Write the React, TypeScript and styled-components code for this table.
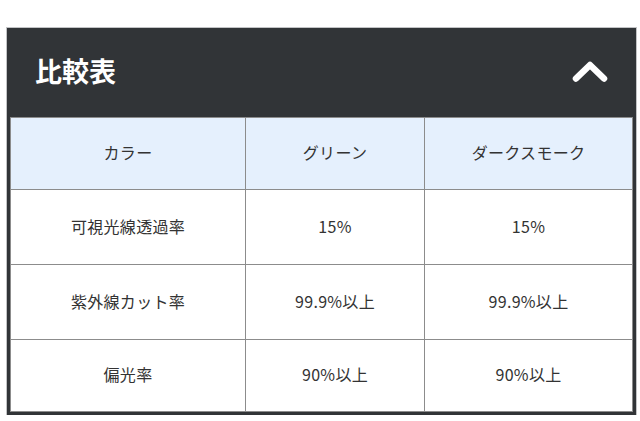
import React from "react";
import styled, { createGlobalStyle } from "styled-components";

const GlobalStyle = createGlobalStyle`
  html, body {
    margin: 0;
    padding: 0;
    background: #ffffff;
  }
  body {
    font-family: "Noto Sans CJK JP", "Noto Sans", sans-serif;
    color: #333333;
  }
`;

const Panel = styled.section`
  margin: 28px 0 0 7px;
  width: 629px;
  box-sizing: border-box;
  background-color: #313437;
  padding: 0 3px 3px;
  box-shadow: 0 0 0 1px rgba(80, 84, 88, 0.35);
`;

const PanelHeader = styled.header`
  height: 89px;
  box-sizing: border-box;
  display: flex;
  align-items: center;
  justify-content: space-between;
  padding: 0 25px 4px 25px;
`;

const PanelTitle = styled.h2`
  margin: 0;
  font-size: 27px;
  line-height: 1;
  font-weight: 700;
  color: #ffffff;
`;

const ToggleButton = styled.button`
  display: flex;
  align-items: center;
  justify-content: center;
  background: none;
  border: none;
  padding: 0;
  cursor: pointer;
`;

const CompareTable = styled.table`
  width: 100%;
  border-collapse: collapse;
  table-layout: fixed;
  background-color: #ffffff;
`;

const Cell = styled.td<{ $head?: boolean; $h: number }>`
  height: ${({ $h }) => $h - 4}px;
  padding: 0 8px 3px;
  border: 1px solid #8c8c8c;
  text-align: center;
  vertical-align: middle;
  font-size: 16px;
  font-weight: 400;
  letter-spacing: 0.3px;
  color: #333333;
  background-color: ${({ $head }) => ($head ? "#e5f0fd" : "#ffffff")};
`;

const rows: { label: string; green: string; smoke: string; h: number }[] = [
  { label: "可視光線透過率", green: "15%", smoke: "15%", h: 75 },
  { label: "紫外線カット率", green: "99.9%以上", smoke: "99.9%以上", h: 75 },
  { label: "偏光率", green: "90%以上", smoke: "90%以上", h: 72 },
];

const ChevronUp = () => (
  <svg width="36" height="24" viewBox="0 0 36 24" aria-hidden="true">
    <polyline
      points="4,19.5 18,6 32,19.5"
      fill="none"
      stroke="#ffffff"
      strokeWidth="6.5"
      strokeLinecap="round"
      strokeLinejoin="round"
    />
  </svg>
);

export default function App() {
  return (
    <>
      <GlobalStyle />
      <Panel>
        <PanelHeader>
          <PanelTitle>比較表</PanelTitle>
          <ToggleButton aria-label="閉じる">
            <ChevronUp />
          </ToggleButton>
        </PanelHeader>
        <CompareTable>
          <colgroup>
            <col style={{ width: 235 }} />
            <col style={{ width: 179 }} />
            <col style={{ width: 208 }} />
          </colgroup>
          <thead>
            <tr>
              <Cell as="th" $head $h={72}>カラー</Cell>
              <Cell as="th" $head $h={72}>グリーン</Cell>
              <Cell as="th" $head $h={72}>ダークスモーク</Cell>
            </tr>
          </thead>
          <tbody>
            {rows.map((r) => (
              <tr key={r.label}>
                <Cell $h={r.h}>{r.label}</Cell>
                <Cell $h={r.h}>{r.green}</Cell>
                <Cell $h={r.h}>{r.smoke}</Cell>
              </tr>
            ))}
          </tbody>
        </CompareTable>
      </Panel>
    </>
  );
}
